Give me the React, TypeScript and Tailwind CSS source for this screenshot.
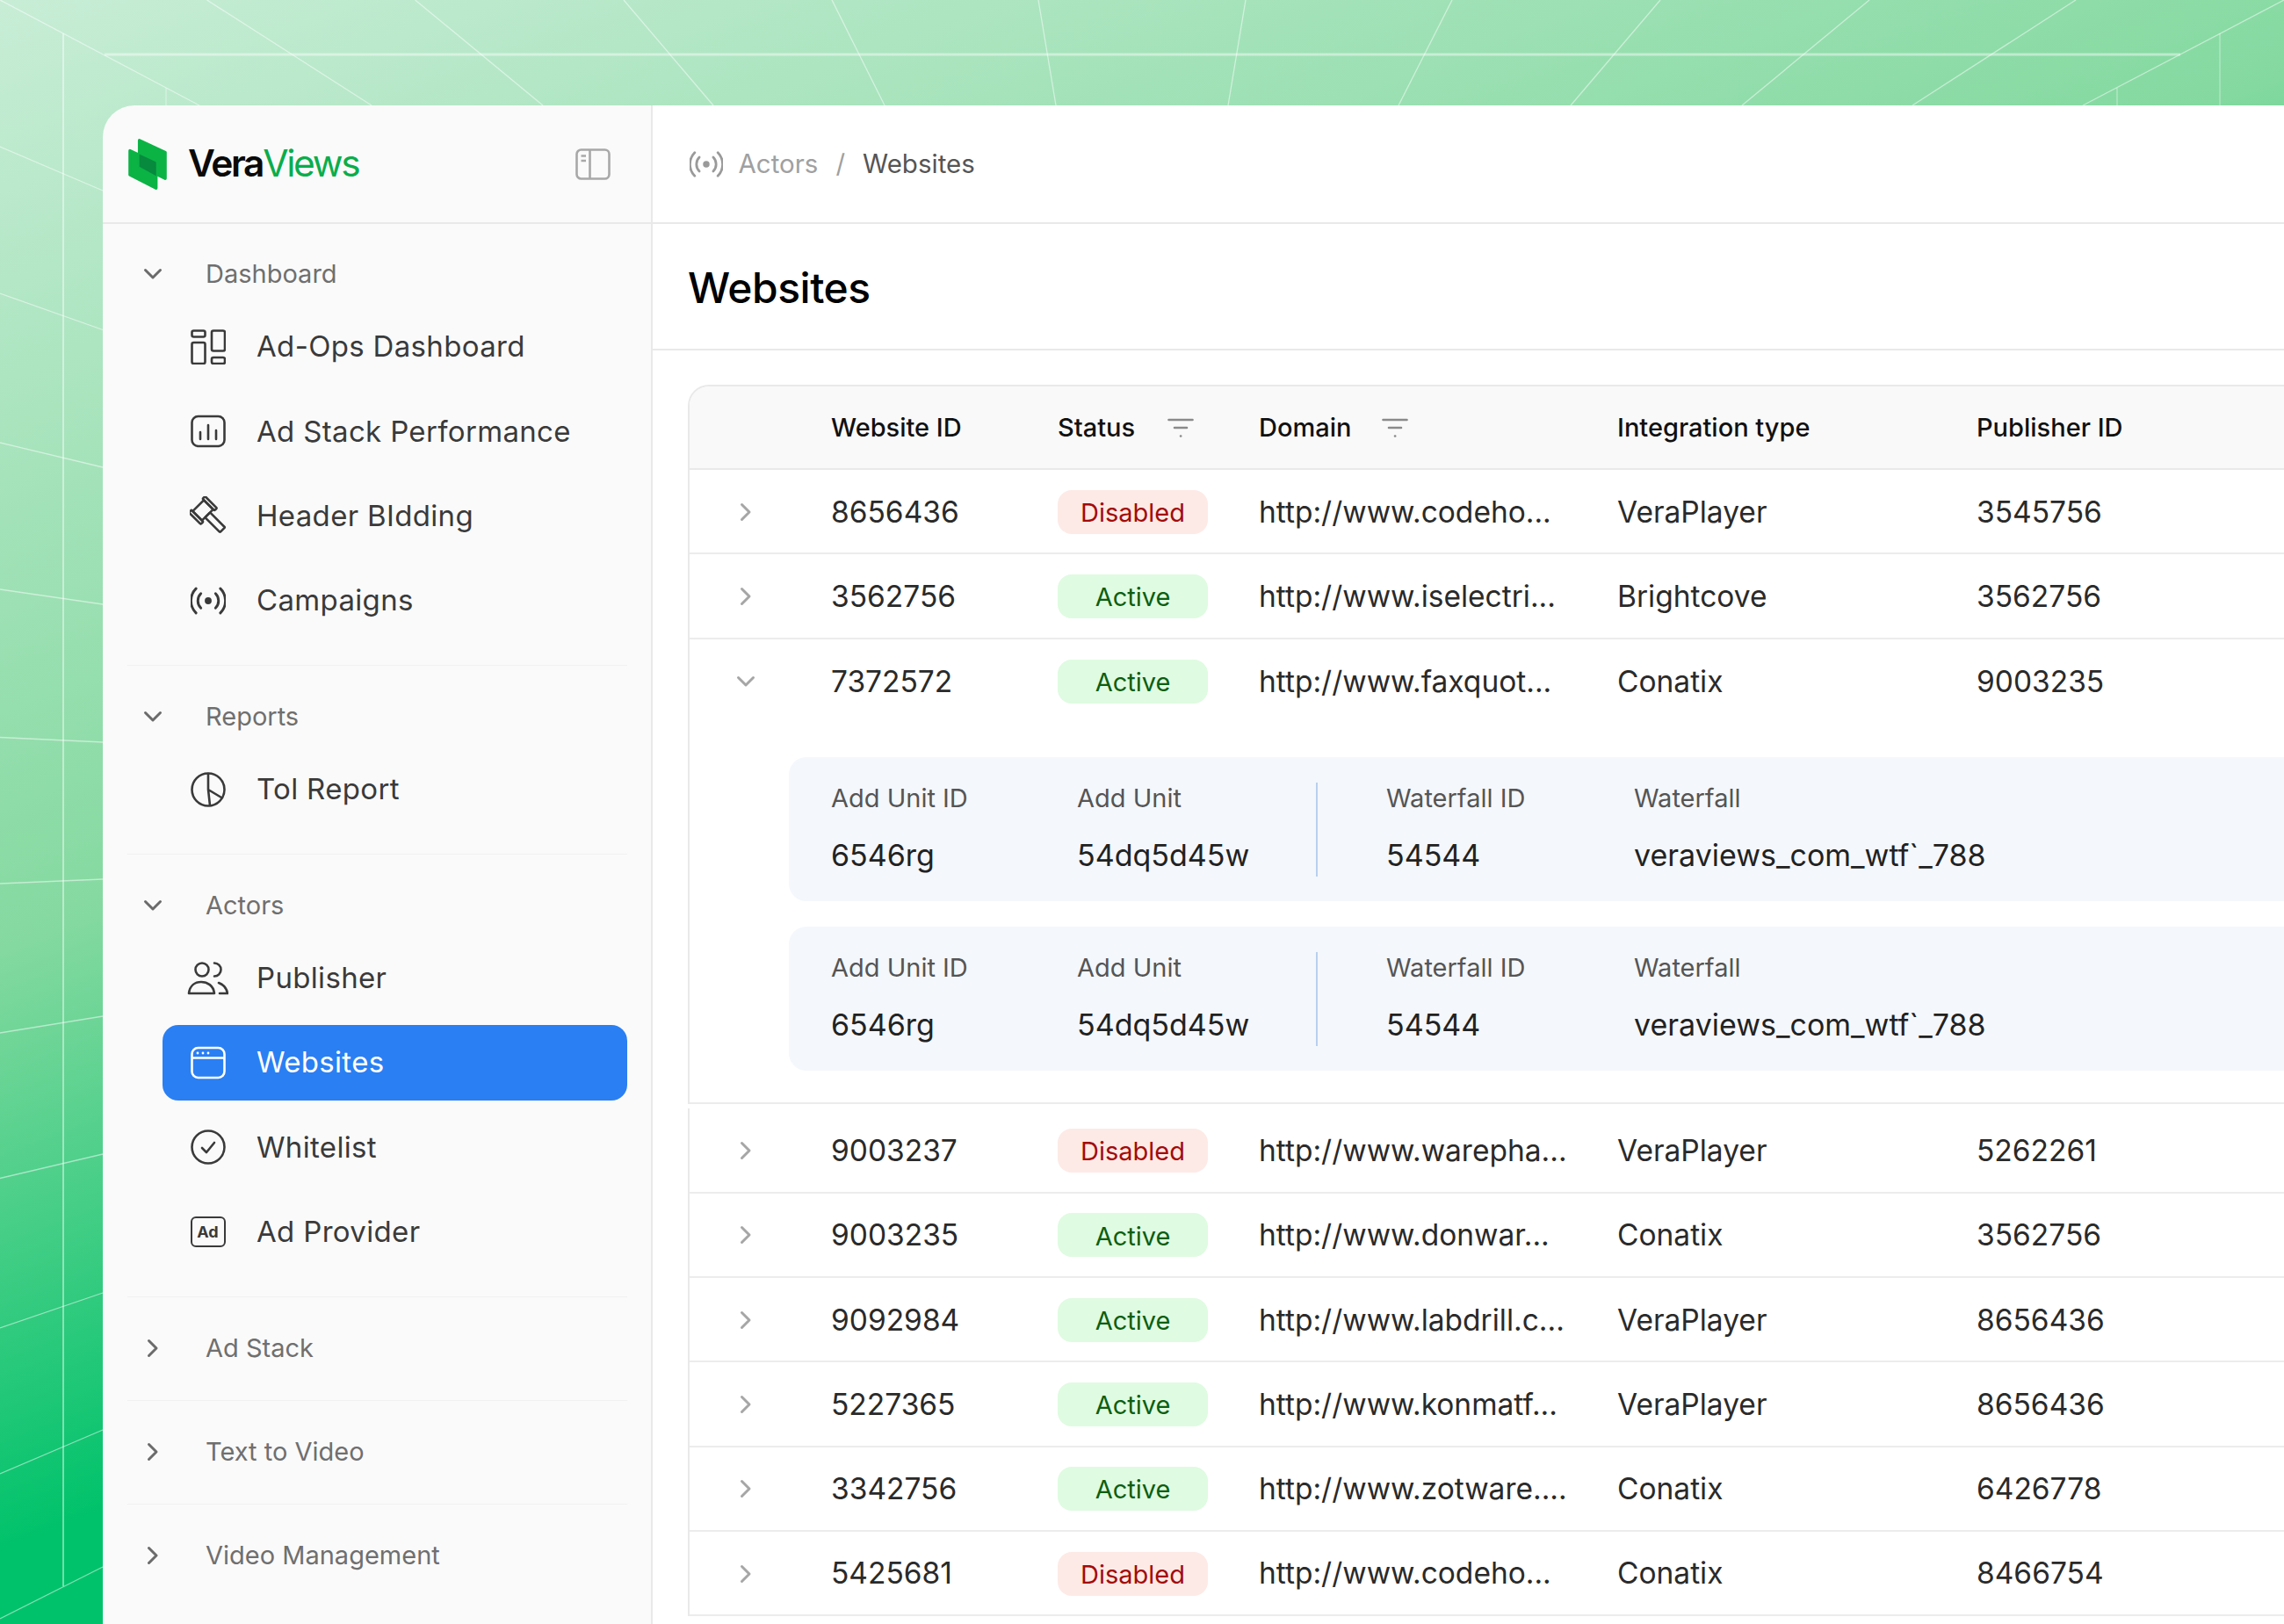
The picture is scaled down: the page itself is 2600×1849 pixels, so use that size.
const stroke = 'stroke-current fill-none shrink-0';

const AdOpsIcon = () => (
  <svg width="40" height="40" viewBox="0 0 40 40" className={stroke} strokeWidth="2.6">
    <rect x="1.5" y="1.5" width="15" height="7" rx="2" />
    <rect x="1.5" y="15" width="15" height="24" rx="2" />
    <rect x="24" y="1.5" width="15" height="23" rx="2" />
    <rect x="24" y="32" width="15" height="7" rx="2" />
  </svg>
);

const StackIcon = () => (
  <svg width="40" height="40" viewBox="0 0 40 40" className={stroke} strokeWidth="2.6" strokeLinecap="round">
    <rect x="1.5" y="3" width="37" height="34" rx="7" />
    <path d="M11 21v8M20 13v16M29 19v10" />
  </svg>
);

const GavelIcon = () => (
  <svg width="42" height="44" viewBox="0 0 42 44" className={stroke} strokeWidth="2.6" strokeLinejoin="round">
    <g transform="rotate(-45 21 22)">
      <rect x="8" y="4" width="4" height="19" rx="1" />
      <rect x="12" y="6" width="18" height="15" />
      <rect x="30" y="4" width="4" height="19" rx="1" />
      <rect x="17" y="21" width="8" height="24" rx="1" />
    </g>
  </svg>
);

const RadioIcon = ({ size = 40 }: { size?: number }) => (
  <svg width={size} height={size} viewBox="1.8 1.8 20.4 20.4" className={stroke} strokeWidth="1.5" strokeLinecap="round" strokeLinejoin="round">
    <path d="M16.247 7.761a6 6 0 0 1 0 8.478" />
    <path d="M19.075 4.933a10 10 0 0 1 0 14.134" />
    <path d="M4.925 19.067a10 10 0 0 1 0-14.134" />
    <path d="M7.753 16.239a6 6 0 0 1 0-8.478" />
    <circle cx="12" cy="12" r="2" className="fill-current stroke-none" />
  </svg>
);

const PieIcon = () => (
  <svg width="40" height="40" viewBox="0 0 40 40" className={stroke} strokeWidth="2.6" strokeLinecap="round">
    <circle cx="20" cy="20" r="18.5" />
    <path d="M20 2v18l2 18M20 20l15 9" />
  </svg>
);

const PublisherIcon = () => (
  <svg width="47" height="40" viewBox="0 0 47 40" className={stroke} strokeWidth="2.6" strokeLinecap="round" strokeLinejoin="round">
    <circle cx="17" cy="10" r="7.5" />
    <path d="M31 2.5a7.5 7.5 0 0 1 0 15" />
    <path d="M2 37c1-9 7-13 14-13s14 4 15 13z" />
    <path d="M36 25c5 2 9 6 10 12h-9" />
  </svg>
);

const BrowserIcon = () => (
  <svg width="40" height="40" viewBox="0 0 40 40" className={stroke} strokeWidth="2.6">
    <rect x="1.5" y="3" width="37" height="34" rx="7" />
    <path d="M1.5 14.5h37" />
    <circle cx="8" cy="9" r="1.4" className="fill-current stroke-none" />
    <circle cx="14" cy="9" r="1.4" className="fill-current stroke-none" />
    <circle cx="20" cy="9" r="1.4" className="fill-current stroke-none" />
  </svg>
);

const CheckIcon = () => (
  <svg width="40" height="40" viewBox="0 0 40 40" className={stroke} strokeWidth="2.6" strokeLinecap="round" strokeLinejoin="round">
    <circle cx="20" cy="20" r="18.5" />
    <path d="M13 21l5 5 9-11" />
  </svg>
);

const AdIcon = () => (
  <div className="flex h-[35px] w-[40px] shrink-0 items-center justify-center rounded-[6px] border-[2.6px] border-current text-[18px] leading-none font-bold">
    Ad
  </div>
);

const ChevronDown = () => (
  <svg width="22" height="14" viewBox="0 0 22 14" className="shrink-0 fill-none stroke-current" strokeWidth="3" strokeLinecap="round" strokeLinejoin="round">
    <path d="M2.5 2.5L11 11l8.500-8.500" />
  </svg>
);

const ChevronRight = () => (
  <svg width="14" height="22" viewBox="0 0 14 22" className="shrink-0 fill-none stroke-current" strokeWidth="3" strokeLinecap="round" strokeLinejoin="round">
    <path d="M2.500 2.500L11 11l-8.500 8.500" />
  </svg>
);

const FilterIcon = () => (
  <svg width="30" height="26" viewBox="0 0 30 26" className="mt-[2px] fill-none stroke-[#8a8a8a]" strokeWidth="2.600" strokeLinecap="round">
    <path d="M1.500 3h27M8 12h14M15 21.500h.2" />
  </svg>
);

const Logo = () => (
  <svg width="46" height="58" viewBox="0 0 130 173" strokeLinejoin="round">
    <path d="M5 40L94 82v86L5 122z" className="fill-[#0bb345] stroke-[#0bb345]" strokeWidth="10" />
    <path d="M37 5l88 41v89L37 92z" className="fill-[#0bb345] stroke-[#0bb345]" strokeWidth="10" />
    <path d="M37 52l57 27v47L37 95z" className="fill-[#078a3d]" />
  </svg>
);

const Backdrop = () => {
  const top = [
    [0, 227], [235.5, 423], [472.600, 618], [710, 812], [947, 1007], [1182, 1202],
    [1418, 1398], [1653, 1592], [1890, 1788], [2128, 1983], [2363, 2177], [2600, 2371],
  ];
  const left = [
    [167, 217], [334, 375.5], [504, 532], [671, 688], [839.5, 845], [1006, 1001],
    [1176, 1157], [1341.5, 1314], [1512, 1472], [1678, 1628], [1843, 1784],
  ];
  return (
    <svg width="2600" height="1849" className="absolute inset-0 fill-none stroke-white/50">
      {top.map(([a, b]) => (
        <line key={a} x1={a} y1="0" x2={b} y2="120" strokeWidth="1.300" />
      ))}
      {left.map(([a, b]) => (
        <line key={a} x1="0" y1={a} x2="117" y2={b} strokeWidth="1.300" />
      ))}
      <line x1="119" y1="62" x2="2482" y2="62" strokeWidth="3" className="stroke-white/45" />
      <line x1="72" y1="38" x2="72" y2="1806" strokeWidth="2" className="stroke-white/45" />
      <line x1="189" y1="100" x2="189" y2="120" strokeWidth="1" />
      <line x1="2410" y1="100" x2="2410" y2="120" strokeWidth="1" />
      <line x1="2527" y1="38" x2="2527" y2="120" strokeWidth="1" />
    </svg>
  );
};

const NavItem = ({ icon, label, active }: { icon: React.ReactNode; label: string; active?: boolean }) => (
  <div className={`flex h-[86.2px] items-center rounded-[18px] pl-[32px] ${active ? 'bg-[#2a7ff3] text-white' : 'text-[#3a3a3a]'}`}>
    <div className="flex w-[40px] shrink-0 items-center justify-center">{icon}</div>
    <span className="ml-[35.5px] text-[33px] tracking-[0.01em]">{label}</span>
  </div>
);

const NavGroup = ({ label, open, children }: { label: string; open?: boolean; children?: React.ReactNode }) => (
  <div className={`border-b border-[#f1f1f1] pt-[38px] ${open ? 'pb-[30px]' : 'pb-[39px]'} last:border-b-0`}>
    <div className="flex h-[40px] items-center">
      <div className="mr-[49px] ml-[18px] flex w-[22px] shrink-0 items-center justify-center text-[#6b6b6b]">
        {open ? <ChevronDown /> : <ChevronRight />}
      </div>
      <span className="text-[29px] text-[#6f6f6f]">{label}</span>
    </div>
    {open && <div className="mt-[20px] ml-[39.5px] flex flex-col gap-[10px]">{children}</div>}
  </div>
);

const Sidebar = () => (
  <aside className="w-[626px] shrink-0 border-r-2 border-[#e9e9e9] bg-[#fafafa]">
    <div className="flex h-[135px] items-center justify-between border-b-2 border-[#e9e9e9] pr-[46px] pl-[28px]">
      <div className="flex items-center gap-[23px]">
        <Logo />
        <div className="text-[42.5px] leading-none tracking-[-0.055em]">
          <span className="font-semibold text-[#0a0a0a]">Vera</span>
          <span className="text-[#0aad4b]">Views</span>
        </div>
      </div>
      <svg width="40" height="36" viewBox="0 0 40 36" className="fill-none stroke-[#a8a8a8]" strokeWidth="2.600">
        <rect x="1.500" y="1.500" width="37" height="33" rx="5" />
        <path d="M16.500 1.500v33M6.500 8.500h5.500M6.500 14h5.500" />
      </svg>
    </div>
    <div className="-mt-px pr-[27px] pl-[28px]">
      <NavGroup label="Dashboard" open>
        <NavItem icon={<AdOpsIcon />} label="Ad-Ops Dashboard" />
        <NavItem icon={<StackIcon />} label="Ad Stack Performance" />
        <NavItem icon={<GavelIcon />} label="Header BIdding" />
        <NavItem icon={<RadioIcon />} label="Campaigns" />
      </NavGroup>
      <NavGroup label="Reports" open>
        <NavItem icon={<PieIcon />} label="Tol Report" />
      </NavGroup>
      <NavGroup label="Actors" open>
        <NavItem icon={<PublisherIcon />} label="Publisher" />
        <NavItem icon={<BrowserIcon />} label="Websites" active />
        <NavItem icon={<CheckIcon />} label="Whitelist" />
        <NavItem icon={<AdIcon />} label="Ad Provider" />
      </NavGroup>
      <NavGroup label="Ad Stack" />
      <NavGroup label="Text to Video" />
      <NavGroup label="Video Management" />
    </div>
  </aside>
);

const gridCols = 'grid grid-cols-[161px_258px_229px_408px_409px_1fr] items-center';

type Row = { id: string; status: 'Active' | 'Disabled'; domain: string; type: string; pub: string };

const StatusBadge = ({ status }: { status: Row['status'] }) => (
  <div
    className={`flex h-[50px] w-[171px] items-center justify-center rounded-[16px] pt-[2px] text-[29px] ${
      status === 'Active' ? 'bg-[#dffbe1] text-[#0d5e11]' : 'bg-[#fdeae6] text-[#a30b0b]'
    }`}
  >
    {status}
  </div>
);

const TableRow = ({ row, open }: { row: Row; open?: boolean }) => (
  <div className={`${gridCols} h-[96.3px] pt-px ${open ? '' : 'border-b-2 border-[#ececec]'} text-[33.5px] text-[#2a2a2a]`}>
    <div className="flex justify-center pr-[34px] text-[#a6a6a6]">
      {open ? <ChevronDown /> : <ChevronRight />}
    </div>
    <span>{row.id}</span>
    <StatusBadge status={row.status} />
    <span>{row.domain}</span>
    <span>{row.type}</span>
    <span>{row.pub}</span>
  </div>
);

const Detail = ({ label, value, className }: { label: string; value: string; className: string }) => (
  <div className={className}>
    <div className="text-[29px] leading-[40px] text-[#555555]">{label}</div>
    <div className="mt-[25px] text-[34px] leading-[40px] text-[#222222]">{value}</div>
  </div>
);

const DetailPanel = () => (
  <div className="flex h-[164px] items-center rounded-l-[20px] bg-[#f4f7fc] pb-[5px] pl-[48px]">
    <Detail label="Add Unit ID" value="6546rg" className="w-[280px]" />
    <Detail label="Add Unit" value="54dq5d45w" className="w-[272px]" />
    <div className="mt-[5px] h-[107px] w-[2px] bg-[#b9d0ee]" />
    <Detail label="Waterfall ID" value="54544" className="ml-[78px] w-[282px]" />
    <Detail label="Waterfall" value="veraviews_com_wtf`_788" className="" />
  </div>
);

const rowsTop: Row[] = [
  { id: '8656436', status: 'Disabled', domain: 'http://www.codeho...', type: 'VeraPlayer', pub: '3545756' },
  { id: '3562756', status: 'Active', domain: 'http://www.iselectri...', type: 'Brightcove', pub: '3562756' },
];

const rowOpen: Row = { id: '7372572', status: 'Active', domain: 'http://www.faxquot...', type: 'Conatix', pub: '9003235' };

const rowsBottom: Row[] = [
  { id: '9003237', status: 'Disabled', domain: 'http://www.warepha...', type: 'VeraPlayer', pub: '5262261' },
  { id: '9003235', status: 'Active', domain: 'http://www.donwar...', type: 'Conatix', pub: '3562756' },
  { id: '9092984', status: 'Active', domain: 'http://www.labdrill.c...', type: 'VeraPlayer', pub: '8656436' },
  { id: '5227365', status: 'Active', domain: 'http://www.konmatf...', type: 'VeraPlayer', pub: '8656436' },
  { id: '3342756', status: 'Active', domain: 'http://www.zotware....', type: 'Conatix', pub: '6426778' },
  { id: '5425681', status: 'Disabled', domain: 'http://www.codeho...', type: 'Conatix', pub: '8466754' },
];

const Main = () => (
  <main className="min-w-0 flex-1 bg-white">
    <div className="flex h-[135px] items-center border-b-2 border-[#e9e9e9] pl-[40px]">
      <div className="ml-[2px] text-[#9a9a9a]">
        <RadioIcon size={38} />
      </div>
      <span className="ml-[17.5px] text-[29.5px] text-[#a0a0a0]">Actors</span>
      <span className="ml-[20px] text-[29.5px] text-[#a0a0a0]">/</span>
      <span className="ml-[20px] text-[29.5px] text-[#555555]">Websites</span>
    </div>
    <div className="flex h-[144px] items-center border-b-2 border-[#e9e9e9] pt-[3px] pl-[40px]">
      <h1 className="text-[48px] font-medium tracking-[-0.01em] text-black">Websites</h1>
    </div>
    <div className="mt-[39px] ml-[40px] rounded-tl-[24px] border-t-2 border-l-2 border-[#e9e9e9]">
      <div className={`${gridCols} h-[95px] rounded-tl-[22px] border-b-2 border-[#e9e9e9] bg-[#f9f9f9] text-[29px] font-medium text-[#111111]`}>
        <span />
        <span>Website ID</span>
        <div className="flex items-center gap-[36.5px]">
          Status
          <FilterIcon />
        </div>
        <div className="flex items-center gap-[34.5px]">
          Domain
          <FilterIcon />
        </div>
        <span>Integration type</span>
        <span>Publisher ID</span>
      </div>
      {rowsTop.map((row) => (
        <TableRow key={row.id} row={row} />
      ))}
      <div className="border-b-2 border-[#ececec] pb-[36px]">
        <TableRow row={rowOpen} open />
        <div className="mt-[38.5px] ml-[113px] flex flex-col gap-[29px]">
          <DetailPanel />
          <DetailPanel />
        </div>
      </div>
    </div>
    <div className="mt-[5px] ml-[40px] border-l-2 border-[#e9e9e9]">
      {rowsBottom.map((row) => (
        <TableRow key={row.id} row={row} />
      ))}
    </div>
  </main>
);

export default function App() {
  return (
    <div className="relative h-[1849px] w-[2600px] overflow-hidden bg-[linear-gradient(159deg,#c8edd6_0%,#84d9a0_38%,#00c26a_62%)] font-[Inter,sans-serif]">
      <Backdrop />
      <div className="relative pt-[120px] pl-[117px]">
        <div className="flex h-[1729px] overflow-hidden rounded-tl-[36px]">
          <Sidebar />
          <Main />
        </div>
      </div>
    </div>
  );
}
